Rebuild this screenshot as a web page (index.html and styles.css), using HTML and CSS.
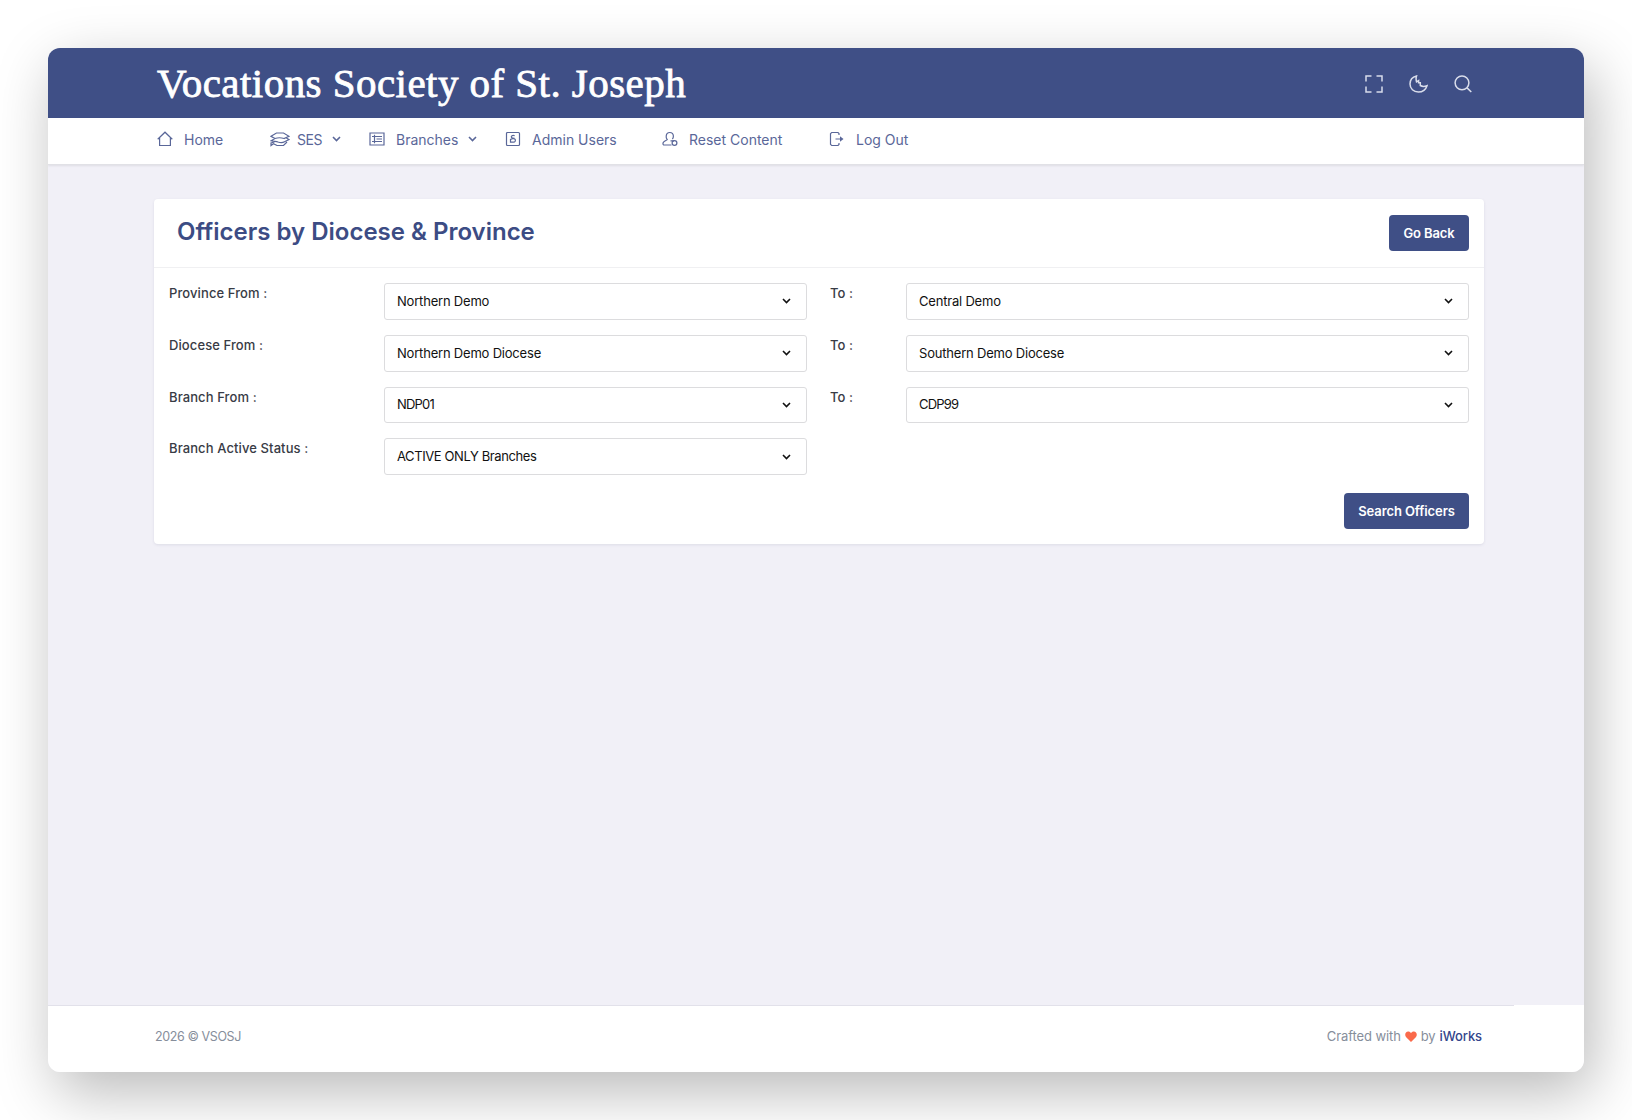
FILE: index.html
```html
<!DOCTYPE html>
<html lang="en">
<head>
    <meta charset="UTF-8">
    <title>Officers by Diocese &amp; Province</title>
    <link rel="stylesheet" href="styles.css">
</head>
<body>
    <div class="window">
        <header class="topbar">
            <div class="brand">Vocations Society of St. Joseph</div>
            <div class="topbar-icons">
                <svg width="18" height="18" viewBox="0 0 18 18"><path d="M1 6.500V1h5.500M11.500 1H17v5.500M17 11.500V17h-5.500M6.500 17H1v-5.500"/></svg>
                <svg width="19" height="18" viewBox="0 0 19 18"><path d="M7.500 1C3.500 2 1 5 1 9c0 4.700 3.600 8 8.300 8 4.200 0 7.500-2.400 8.700-6.300-2.300.9-5 .9-6.700-.2V7.800H9.600V5.600L7.500 6.800C7 5 6.900 3 7.500 1z"/></svg>
                <svg width="18" height="18" viewBox="0 0 18 18"><circle cx="8" cy="7.800" r="6.900"/><path d="M12.800 12.600l4.500 4.400"/></svg>
            </div>
        </header>

        <nav class="navbar">
            <a class="nav-home" href="#">
                <svg width="16" height="16" viewBox="0 0 16 16"><path d="M.7 8.200L8 1.200l7.300 7M2.600 6.600V14.500h10.800V6.600"/></svg>
                <span>Home</span>
            </a>
            <a class="nav-ses" href="#">
                <svg width="20" height="16" viewBox="0 0 20 16"><path d="M1 5.300L6.500 2h7L19 5.300l-5 2.200c-3-1-6-1-9 0zM5 7.500L1 9.800c3 .9 5 .3 7 1.200 2 .7 5 .7 6.500-.3L19 8.500l-3-1.800M4.500 11L1 12v2.500l2.500-1.800L7 14.500h6.500L17 11"/></svg>
                <span>SES</span>
                <svg class="caret" width="9" height="6" viewBox="0 0 9 6"><path d="M1 1l3.500 3.500L8 1"/></svg>
            </a>
            <a class="nav-branches" href="#">
                <svg width="16" height="16" viewBox="0 0 16 16"><path d="M1 2h14v12H1zM5.500 3.800v8.500M3 5.500h10M3 10.500h10M7.500 8H13"/></svg>
                <span>Branches</span>
                <svg class="caret" width="9" height="6" viewBox="0 0 9 6"><path d="M1 1l3.500 3.500L8 1"/></svg>
            </a>
            <a class="nav-admin" href="#">
                <svg width="16" height="16" viewBox="0 0 16 16"><rect x="1.500" y="1.500" width="13" height="13" rx="1"/><path d="M9.700 4.700C7.500 3.800 5.800 5 6.500 6.500L10 8.200c1 1.500 0 3-1.500 3H5.500V8.500L9.500 7"/></svg>
                <span>Admin Users</span>
            </a>
            <a class="nav-reset" href="#">
                <svg width="16" height="16" viewBox="0 0 16 16"><path d="M9.500 14H2.200c-1.700 0-1.600-2.600 0-3.500l3-1.800C4.300 7.500 4 6.300 4.200 5c.4-4.700 6.800-4.700 7.200 0 0 1.300-.3 2.300-1 3.200M8.500 9.800h3.500"/><circle cx="12.500" cy="12" r="2.400"/></svg>
                <span>Reset Content</span>
            </a>
            <a class="nav-logout" href="#">
                <svg width="16" height="16" viewBox="0 0 16 16"><path d="M10 4V2.500l-1-1H2.700L1.500 2.700v10.600l1.200 1.200H9l1-1V12M6.500 8H13"/><path class="solid" d="M11 5.200L14.500 8 11 10.800z"/></svg>
                <span>Log Out</span>
            </a>
        </nav>

        <main class="content">
            <section class="card">
                <div class="card-header">
                    <h1>Officers by Diocese &amp; Province</h1>
                    <button class="btn btn-back" type="button">Go Back</button>
                </div>
                <form class="search-form">
                    <label for="province_from">Province From :</label>
                    <div class="select">
                        <select id="province_from"><option>Northern Demo</option></select>
                        <svg width="9" height="6" viewBox="0 0 9 6"><path d="M1 1l3.500 3.500L8 1"/></svg>
                    </div>
                    <label class="to" for="province_to">To :</label>
                    <div class="select">
                        <select id="province_to"><option>Central Demo</option></select>
                        <svg width="9" height="6" viewBox="0 0 9 6"><path d="M1 1l3.500 3.500L8 1"/></svg>
                    </div>

                    <label for="diocese_from">Diocese From :</label>
                    <div class="select">
                        <select id="diocese_from"><option>Northern Demo Diocese</option></select>
                        <svg width="9" height="6" viewBox="0 0 9 6"><path d="M1 1l3.500 3.500L8 1"/></svg>
                    </div>
                    <label class="to" for="diocese_to">To :</label>
                    <div class="select">
                        <select id="diocese_to"><option>Southern Demo Diocese</option></select>
                        <svg width="9" height="6" viewBox="0 0 9 6"><path d="M1 1l3.500 3.500L8 1"/></svg>
                    </div>

                    <label for="branch_from">Branch From :</label>
                    <div class="select code">
                        <select id="branch_from"><option>NDP01</option></select>
                        <svg width="9" height="6" viewBox="0 0 9 6"><path d="M1 1l3.500 3.500L8 1"/></svg>
                    </div>
                    <label class="to" for="branch_to">To :</label>
                    <div class="select code">
                        <select id="branch_to"><option>CDP99</option></select>
                        <svg width="9" height="6" viewBox="0 0 9 6"><path d="M1 1l3.500 3.500L8 1"/></svg>
                    </div>

                    <label for="status">Branch Active Status :</label>
                    <div class="select status">
                        <select id="status"><option>ACTIVE ONLY Branches</option></select>
                        <svg width="9" height="6" viewBox="0 0 9 6"><path d="M1 1l3.500 3.500L8 1"/></svg>
                    </div>
                </form>
                <div class="card-actions">
                    <button class="btn btn-search" type="button">Search Officers</button>
                </div>
            </section>
        </main>

        <footer class="footer">
            <span class="copyright">2026 © VSOSJ</span>
            <span class="crafted">Crafted with
                <svg width="12" height="11" viewBox="0 0 12 11"><path d="M6 11L1.200 6.200C-.8 4 .4.500 3.200.500 4.400.500 5.400 1.100 6 2 6.600 1.100 7.600.500 8.800.500c2.800 0 4 3.500 2 5.700z"/></svg>
                by <a href="#">iWorks</a></span>
        </footer>
    </div>
</body>
</html>
```

FILE: styles.css
```css
* {
    box-sizing: border-box;
}
body {
    margin: 0;
    padding: 48px;
    height: 1120px;
    overflow: hidden;
    background-color: #fff;
    font-family: Inter, "Open Sans", sans-serif;
    font-size: 13px;
}
a {
    color: inherit;
    text-decoration: none;
}
svg {
    display: block;
    flex: none;
    fill: none;
    stroke: currentColor;
}
.window {
    display: flex;
    flex-direction: column;
    height: 1024px;
    border-radius: 12px;
    overflow: hidden;
    background-color: #f1f0f7;
    box-shadow: 8px 20px 60px rgba(0, 0, 0, 0.28);
}

/* top bar */
.topbar {
    display: flex;
    justify-content: space-between;
    align-items: center;
    height: 70px;
    padding: 0 112px 0 109px;
    background-color: #3f4f86;
    color: #fff;
}
.brand {
    font-family: "Liberation Serif", serif;
    font-size: 41px;
    line-height: 60px;
    letter-spacing: 0.45px;
    white-space: nowrap;
    -webkit-text-stroke: 0.8px #fff;
}
.topbar-icons {
    display: flex;
    gap: 26px;
    padding-top: 1px;
    color: #d9ddeb;
}
.topbar-icons svg {
    stroke-width: 1.5;
}

/* menu */
.navbar {
    display: grid;
    grid-template-columns: 113px 99px 136px 157px 167px auto;
    align-items: center;
    height: 47px;
    padding: 0 0 4px 109px;
    background-color: #fff;
    border-bottom: 1px solid #e1e1e6;
    box-shadow: 0 1px 2px rgba(0, 0, 0, 0.08);
    color: #5a6799;
    font-size: 14px;
}
.navbar a {
    display: flex;
    align-items: center;
    gap: 11px;
    white-space: nowrap;
}
.navbar .nav-ses {
    gap: 7px;
}
.nav-ses span {
    letter-spacing: -0.4px;
}
.nav-ses .caret {
    margin-left: 3px;
}
.nav-branches .caret {
    margin-left: -1px;
}
.navbar svg {
    stroke-width: 1.2;
}
.navbar .caret {
    stroke-width: 1.6;
}
.navbar .solid {
    fill: currentColor;
    stroke: none;
}

/* card */
.content {
    flex: 1;
    padding: 34px 100px 0 106px;
}
.card {
    height: 345px;
    background-color: #fff;
    border-radius: 4px;
    box-shadow: 0 1px 3px rgba(50, 50, 90, 0.1);
}
.card-header {
    display: flex;
    justify-content: space-between;
    align-items: center;
    height: 69px;
    padding: 0 15px 0 23px;
    border-bottom: 1px solid #f0f0f2;
}
h1 {
    margin: 0;
    padding-bottom: 3px;
    color: #3c4c84;
    font-size: 24px;
    font-weight: 600;
}
.btn {
    height: 36px;
    padding: 0;
    border: none;
    border-radius: 4px;
    background-color: #3f4f86;
    color: #fff;
    font-family: inherit;
    font-size: 13px;
    font-weight: 600;
    letter-spacing: -0.1px;
    cursor: pointer;
}
.btn-back {
    width: 80px;
}
.btn-search {
    width: 125px;
}
.search-form {
    display: grid;
    grid-template-columns: 215px 423px 99px 563px;
    row-gap: 15px;
    padding: 15px 15px 0 15px;
}
label {
    padding-top: 2px;
    color: #383b45;
    font-weight: 500;
    letter-spacing: 0.1px;
}
label.to {
    padding-left: 23px;
}
.select {
    display: grid;
    grid-template-columns: 1fr 24px;
    align-items: center;
    height: 36.8px;
    border: 1px solid #dcdcde;
    border-radius: 3px;
    color: #111;
    letter-spacing: -0.2px;
}
.select.code {
    letter-spacing: -0.8px;
}
.select.status {
    letter-spacing: -0.4px;
}
.select select {
    appearance: none;
    grid-area: 1 / 1 / 2 / 3;
    width: 100%;
    height: 100%;
    padding: 0 12px 1px;
    border: none;
    background: none;
    color: inherit;
    font: inherit;
    letter-spacing: inherit;
}
.select svg {
    grid-area: 1 / 2;
    stroke-width: 1.6;
}
.card-actions {
    display: flex;
    justify-content: flex-end;
    padding: 18px 15px 0 0;
}

/* footer */
.footer {
    display: flex;
    justify-content: space-between;
    align-items: center;
    height: 67px;
    padding: 0 102px 5px 107px;
    background: linear-gradient(#e2e1ea, #e2e1ea) 0 0 / 1466px 1px no-repeat #fff;
    color: #868e9b;
}
.copyright {
    font-size: 12.5px;
    letter-spacing: -0.4px;
}
.crafted {
    display: flex;
    align-items: center;
    gap: 4px;
    letter-spacing: -0.1px;
}
.crafted svg {
    fill: #fa6a4b;
    stroke: none;
}
.crafted a {
    color: #33458c;
    font-weight: 500;
}
```
